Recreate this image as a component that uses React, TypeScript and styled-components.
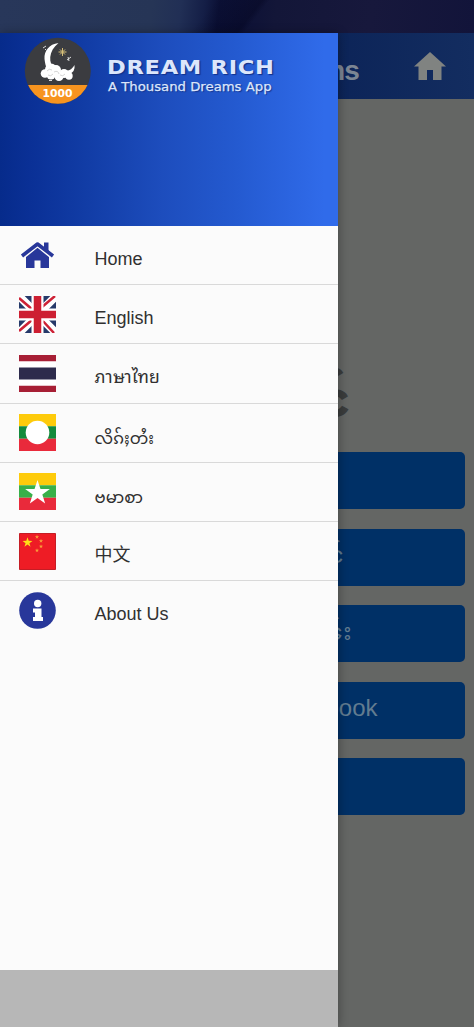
import React from 'react';
import styled, { createGlobalStyle } from 'styled-components';

const Global = createGlobalStyle`
  *{box-sizing:border-box}
  body{margin:0;background:#646665;font-family:Roboto,"Liberation Sans",sans-serif}
`;
const Screen = styled.div`
  position:relative;width:474px;height:1027px;overflow:hidden;background:#646664;
  display:flex;flex-direction:column;
`;
const StatusBar = styled.div`
  height:33px;flex:none;
  background:linear-gradient(128deg,transparent 0 43%,rgba(3,4,30,.4) 52.5%,transparent 54%),
    linear-gradient(97deg,#28375a 0%,#263556 32%,#212f55 38%,#141e46 43%,#0b1035 46%,#0d1136 51%,#131638 58%,#17183c 78%,#12143a 100%);
`;
const AppBar = styled.header`
  height:66px;flex:none;display:flex;align-items:center;justify-content:flex-end;
  background:linear-gradient(90deg,#0c2458 70%,#132d60);
  color:#7f8484;padding-right:28px;
`;
const AppTitle = styled.h1`
  margin:10px 55px 0 0;font:bold 28px/34px "Liberation Sans",sans-serif;letter-spacing:-.9px;color:#7b8593;
`;
const Page = styled.main`
  flex:1;display:flex;flex-direction:column;align-items:stretch;padding:280px 9.5px 0 10px;
`;
const Heading = styled.h2`
  margin:0 115px 19px 0;height:54px;text-align:right;font:bold 46px/54px "Noto Sans Myanmar","Noto Sans",sans-serif;color:#3b3d3d;
  -webkit-text-stroke:1.5px #3b3d3d;
`;
const PageButton = styled.div<{ $inset: number }>`
  height:57px;margin-bottom:19.6px;border-radius:5px;background:#003066;color:#627c90;
  display:flex;align-items:center;justify-content:flex-end;padding:0 ${p => p.$inset}px 4px 0;
  font:24px/30px "Liberation Sans","Noto Sans Myanmar",sans-serif;white-space:nowrap;
`;
const Drawer = styled.aside`
  position:absolute;left:0;top:33px;width:338px;bottom:0;background:#fbfbfb;
  box-shadow:1px 0 9px rgba(0,0,0,.3);display:flex;flex-direction:column;
`;
const Banner = styled.div`
  height:193px;flex:none;background:linear-gradient(90deg,#062b8b 0%,#0a3096 9%,#113ca5 25%,#1d4dbd 48%,#245ad0 70%,#306bea 96%);
  display:flex;align-items:flex-start;padding:4px 0 0 24px;
`;
const Brand = styled.div`padding:18px 0 0 16px;color:#dce6fb;white-space:nowrap;text-shadow:1px 1px 1px #12308a;`;
const BrandName = styled.div`font:bold 19px/25px "DejaVu Sans",sans-serif;letter-spacing:.6px;transform:scaleX(1.188);transform-origin:0 0;`;
const Tagline = styled.div`font:11.5px/15px "DejaVu Sans",sans-serif;margin-left:1px;-webkit-text-stroke:.25px #dce6fb;transform:scaleX(1.15);transform-origin:0 0;`;
const List = styled.nav`flex:1;`;
const Row = styled.div<{ $last?: boolean }>`
  height:59.2px;display:flex;align-items:center;padding-left:19px;
  border-bottom:${p => (p.$last ? 'none' : '1px solid #d9d9d9')};
`;
const IconBox = styled.div`width:37px;height:37px;margin-right:38.5px;display:flex;svg{display:block}`;
const Label = styled.span<{ $size?: number; $drop?: number }>`
  color:#303030;font:${p => p.$size ?? 18}px/24px "Liberation Sans","Noto Sans Thai Looped","Noto Looped Thai","Loma","Garuda","Noto Serif Thai","Noto Sans Myanmar","Noto Sans CJK SC",sans-serif;
  padding-top:${p => p.$drop ?? 7}px;white-space:nowrap;
`;
const NavInset = styled.div`height:57px;flex:none;background:#b7b7b7;`;

const star = (cx: number, cy: number, r: number) =>
  Array.from({ length: 10 }, (_, i) => {
    const a = -Math.PI / 2 + (i * Math.PI) / 5;
    const q = i % 2 ? r * 0.39 : r;
    return `${cx + q * Math.cos(a)},${cy + q * Math.sin(a)}`;
  }).join(' ');

const Logo = () => (
  <svg width="67" height="67" viewBox="0 0 67 67">
    <defs><clipPath id="disc"><circle cx="33.8" cy="33.8" r="33" /></clipPath></defs>
    <g clipPath="url(#disc)">
      <path fill="#3b3c40" d="M0 0h67v67H0z" />
      <path fill="#f7941f" d="M0 48h67v19H0z" />
    </g>
    <path fill="#fff" d="M34.500 6C25 7 20 14 20.500 22c.5 4 1 7 3 10l8 1c-8-7-7-19 3-27z" />
    <g fill="#fff">
      <circle cx="21" cy="36.500" r="4.300" /><circle cx="27" cy="32.500" r="6" /><circle cx="32" cy="33" r="5" />
      <circle cx="27" cy="38" r="4.500" /><circle cx="35" cy="39.500" r="4.500" /><circle cx="40" cy="36.500" r="4.500" /><circle cx="45" cy="39" r="3.700" />
      <path d="M41 33.500q6 1 9.500-5.500 1 7-5.500 9z" />
    </g>
    <path fill="none" stroke="#bbb" strokeWidth=".6" d="M23 34q2-3 5-1M30 35q4-2 5 2M24 38q3 2 5-1M36 38q3 2 5-1" />
    <path stroke="#d5be78" strokeWidth="1" d="M38.500 11v8M34.500 15h8M36 12.500l5 5M41 12.500l-5 5" />
    <path stroke="#ddd" strokeWidth="1" d="M43 23l4-3M44 20l1 4M19 11l3-2M21 13l1-1M25 43.500h3" />
    <text x="33.500" y="59.500" textAnchor="middle" textLength="30" lengthAdjust="spacingAndGlyphs" fill="#fff" fontFamily="DejaVu Sans" fontWeight="bold" fontSize="10">1000</text>
  </svg>
);
const HomeIcon = () => (
  <svg width="37" height="37" viewBox="0 0 37 37">
    <path fill="#28379a" d="M7 19 18.500 10 30 19V31H21.500V23.500h-6v7.500H7z" />
    <path fill="none" stroke="#fbfbfb" strokeWidth="6" d="M3 19.500 18.500 7 34 19.500" />
    <path fill="#28379a" d="M25 5.500h4.500v10l-4.500-4z" />
    <path fill="none" stroke="#28379a" strokeWidth="3.600" strokeLinejoin="round" d="M3 19 18.500 7 34 19" />
  </svg>
);
const UK = () => (
  <svg width="37" height="37" viewBox="0 0 37 37">
    <path fill="#263a6a" d="M0 0h37v37H0z" />
    <path stroke="#fff" strokeWidth="8" d="M0 0 37 37M37 0 0 37" />
    <path stroke="#cd2236" strokeWidth="2.500" d="M0 2 14 14M23 24 35 37M36 0 23 11M13 24 0 35" />
    <path stroke="#fff" strokeWidth="12" d="M18.500 0v37M0 18.500h37" />
    <path stroke="#cd1f32" strokeWidth="7.500" d="M18.500 0v37M0 18.500h37" />
  </svg>
);
const Thai = () => (
  <svg width="37" height="37" viewBox="0 0 37 37">
    <path fill="#fff" d="M0 0h37v37H0z" />
    <path fill="#a71f35" d="M0 0h37v6.300H0zM0 30.700h37V37H0z" /><path fill="#2d2b4c" d="M0 12.500h37v12H0z" />
  </svg>
);
const Bands = ({ green, children }: { green: string; children: React.ReactNode }) => (
  <svg width="37" height="37" viewBox="0 0 37 37">
    <path fill="#fecb0b" d="M0 0h37v12.300H0z" /><path fill={green} d="M0 12.300h37v12.400H0z" />
    <path fill="#e92a3b" d="M0 24.700h37V37H0z" />{children}
  </svg>
);
const China = () => (
  <svg width="37" height="37" viewBox="0 0 37 37">
    <path fill="#ee1c25" stroke="#c51d25" d="M.5.5h36v36H.5z" />
    <polygon fill="#ffde17" points={star(8.5, 9.5, 5.2)} />
    <g fill="#f9a03a">
      <polygon points={star(18, 4, 2.2)} /><polygon points={star(22, 8, 2.2)} />
      <polygon points={star(22, 13.5, 2.2)} /><polygon points={star(18, 17.500, 2.2)} />
    </g>
  </svg>
);
const Info = () => (
  <svg width="37" height="37" viewBox="0 0 37 37">
    <circle cx="18.500" cy="18.500" r="18.300" fill="#28379a" />
    <circle cx="18.700" cy="11.500" r="3.700" fill="#fff" />
    <path fill="#fff" d="M14 16.500h8.500V25H24v4H14v-4h2v-4.500h-2z" />
  </svg>
);

interface Item { icon: React.ReactNode; label: string; size?: number; drop?: number }
const items: Item[] = [
  { icon: <HomeIcon />, label: 'Home' },
  { icon: <UK />, label: 'English' },
  { icon: <Thai />, label: 'ภาษาไทย', size: 17.5, drop: 8 },
  { icon: <Bands green="#138a3c"><circle cx="18.500" cy="18.500" r="11.800" fill="#fff" /></Bands>, label: 'လိၵ်ႈတႆး', size: 16.5, drop: 10 },
  { icon: <Bands green="#38b049"><polygon fill="#fff" points={star(18.5, 20, 13)} /></Bands>, label: 'ဗမာစာ', size: 16.5, drop: 10 },
  { icon: <China />, label: '中文' },
  { icon: <Info />, label: 'About Us' },
];

export default function App() {
  return (
    <>
      <Global />
      <Screen>
        <StatusBar />
        <AppBar>
          <AppTitle>Dreams</AppTitle>
          <svg width="32" height="28" viewBox="0 0 32 28"><path fill="#808381" d="M16 0 32 14.500h-4.500V28H19V18h-6v10H4.500V14.500H0z" /></svg>
        </AppBar>
        <Page>
          <Heading>င်</Heading>
          <PageButton $inset={110} />
          <PageButton $inset={121}>င်</PageButton>
          <PageButton $inset={113}>ၼ်း</PageButton>
          <PageButton $inset={87}>Facebook</PageButton>
          <PageButton $inset={110} />
        </Page>
        <Drawer>
          <Banner>
            <Logo />
            <Brand>
              <BrandName>DREAM RICH</BrandName>
              <Tagline>A Thousand Dreams App</Tagline>
            </Brand>
          </Banner>
          <List>
            {items.map((it, i) => (
              <Row key={it.label} $last={i === items.length - 1}>
                <IconBox>{it.icon}</IconBox>
                <Label $size={it.size} $drop={it.drop}>{it.label}</Label>
              </Row>
            ))}
          </List>
          <NavInset />
        </Drawer>
      </Screen>
    </>
  );
}
